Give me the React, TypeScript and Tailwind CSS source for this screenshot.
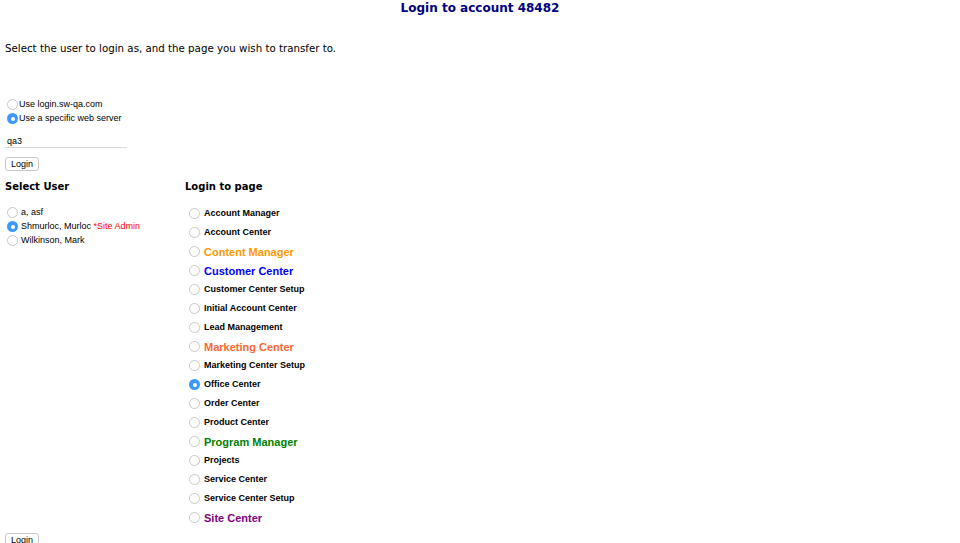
import React from "react";

function Radio({ checked }: { checked?: boolean }) {
  return checked ? (
    <span className="inline-flex w-[11px] h-[11px] rounded-full bg-[#3b99fc] items-center justify-center shrink-0">
      <span className="w-[4px] h-[4px] rounded-full bg-white" />
    </span>
  ) : (
    <span className="inline-block w-[11px] h-[11px] rounded-full border border-[#c8c8c8] bg-white shrink-0" />
  );
}

const pages: { name: string; color?: string; big?: boolean; checked?: boolean }[] = [
  { name: "Account Manager" },
  { name: "Account Center" },
  { name: "Content Manager", color: "text-[#ff9900]", big: true },
  { name: "Customer Center", color: "text-[#0000ff]", big: true },
  { name: "Customer Center Setup" },
  { name: "Initial Account Center" },
  { name: "Lead Management" },
  { name: "Marketing Center", color: "text-[#ff6633]", big: true },
  { name: "Marketing Center Setup" },
  { name: "Office Center", checked: true },
  { name: "Order Center" },
  { name: "Product Center" },
  { name: "Program Manager", color: "text-[#008000]", big: true },
  { name: "Projects" },
  { name: "Service Center" },
  { name: "Service Center Setup" },
  { name: "Site Center", color: "text-[#800080]", big: true },
];

function Btn() {
  return (
    <span className="inline-flex items-center h-[14px] px-[5px] border border-[#c8c8c8] rounded-[3px] bg-white text-[9px] text-black font-['Liberation_Sans',Arial,sans-serif]">
      Login
    </span>
  );
}

export default function App() {
  return (
    <div className="w-[960px] h-[543px] overflow-hidden bg-white text-black font-['DejaVu_Sans',Verdana,sans-serif]">
      <div className="h-[15px] flex justify-center items-center pt-[1px]">
        <h1 className="text-[12px] font-bold text-[#000080] leading-none">Login to account 48482</h1>
      </div>
      <div className="pl-[5px] pt-[28px] text-[10.25px] leading-none">
        Select the user to login as, and the page you wish to transfer to.
      </div>
      <div className="pl-[7px] pt-[46px] flex flex-col gap-[3px] text-[9px] font-['Liberation_Sans',Arial,sans-serif]">
        <label className="flex items-center gap-[1px] h-[11px]">
          <Radio />
          <span>Use login.sw-qa.com</span>
        </label>
        <label className="flex items-center gap-[1px] h-[11px]">
          <Radio checked />
          <span>Use a specific web server</span>
        </label>
      </div>
      <div className="pl-[5px] pt-[9px] flex flex-col">
        <div className="w-[122px] h-[15px] border-b border-[#d8d8d8] flex items-center pl-[2px] pt-[2px] text-[9px] font-['Liberation_Sans',Arial,sans-serif]">
          qa3
        </div>
        <div className="pt-[9px] flex">
          <Btn />
        </div>
      </div>
      <div className="flex pl-[5px] pt-[11px]">
        <div className="w-[180px]">
          <div className="text-[10px] font-bold leading-none h-[12px]">Select User</div>
          <div className="pt-[13px] pl-[2px] flex flex-col gap-[3px] text-[9px] font-['Liberation_Sans',Arial,sans-serif]">
            <label className="flex items-center gap-[3px] h-[11px]">
              <Radio />
              <span>a, asf</span>
            </label>
            <label className="flex items-center gap-[3px] h-[11px]">
              <Radio checked />
              <span>
                Shmurloc, Murloc <span className="text-[#ff0000]">*Site Admin</span>
              </span>
            </label>
            <label className="flex items-center gap-[3px] h-[11px]">
              <Radio />
              <span>Wilkinson, Mark</span>
            </label>
          </div>
        </div>
        <div>
          <div className="text-[10px] font-bold leading-none h-[12px]">Login to page</div>
          <div className="pt-[14px] pl-[4px] flex flex-col gap-[8px] font-['Liberation_Sans',Arial,sans-serif] font-bold">
            {pages.map((p) => (
              <label key={p.name} className="flex items-center gap-[4px] h-[11px]">
                <Radio checked={p.checked} />
                <span className={(p.big ? "text-[11px] " : "text-[9px] ") + (p.color ?? "text-black")}>{p.name}</span>
              </label>
            ))}
          </div>
        </div>
      </div>
      <div className="pl-[5px] pt-[10px] flex">
        <Btn />
      </div>
    </div>
  );
}
